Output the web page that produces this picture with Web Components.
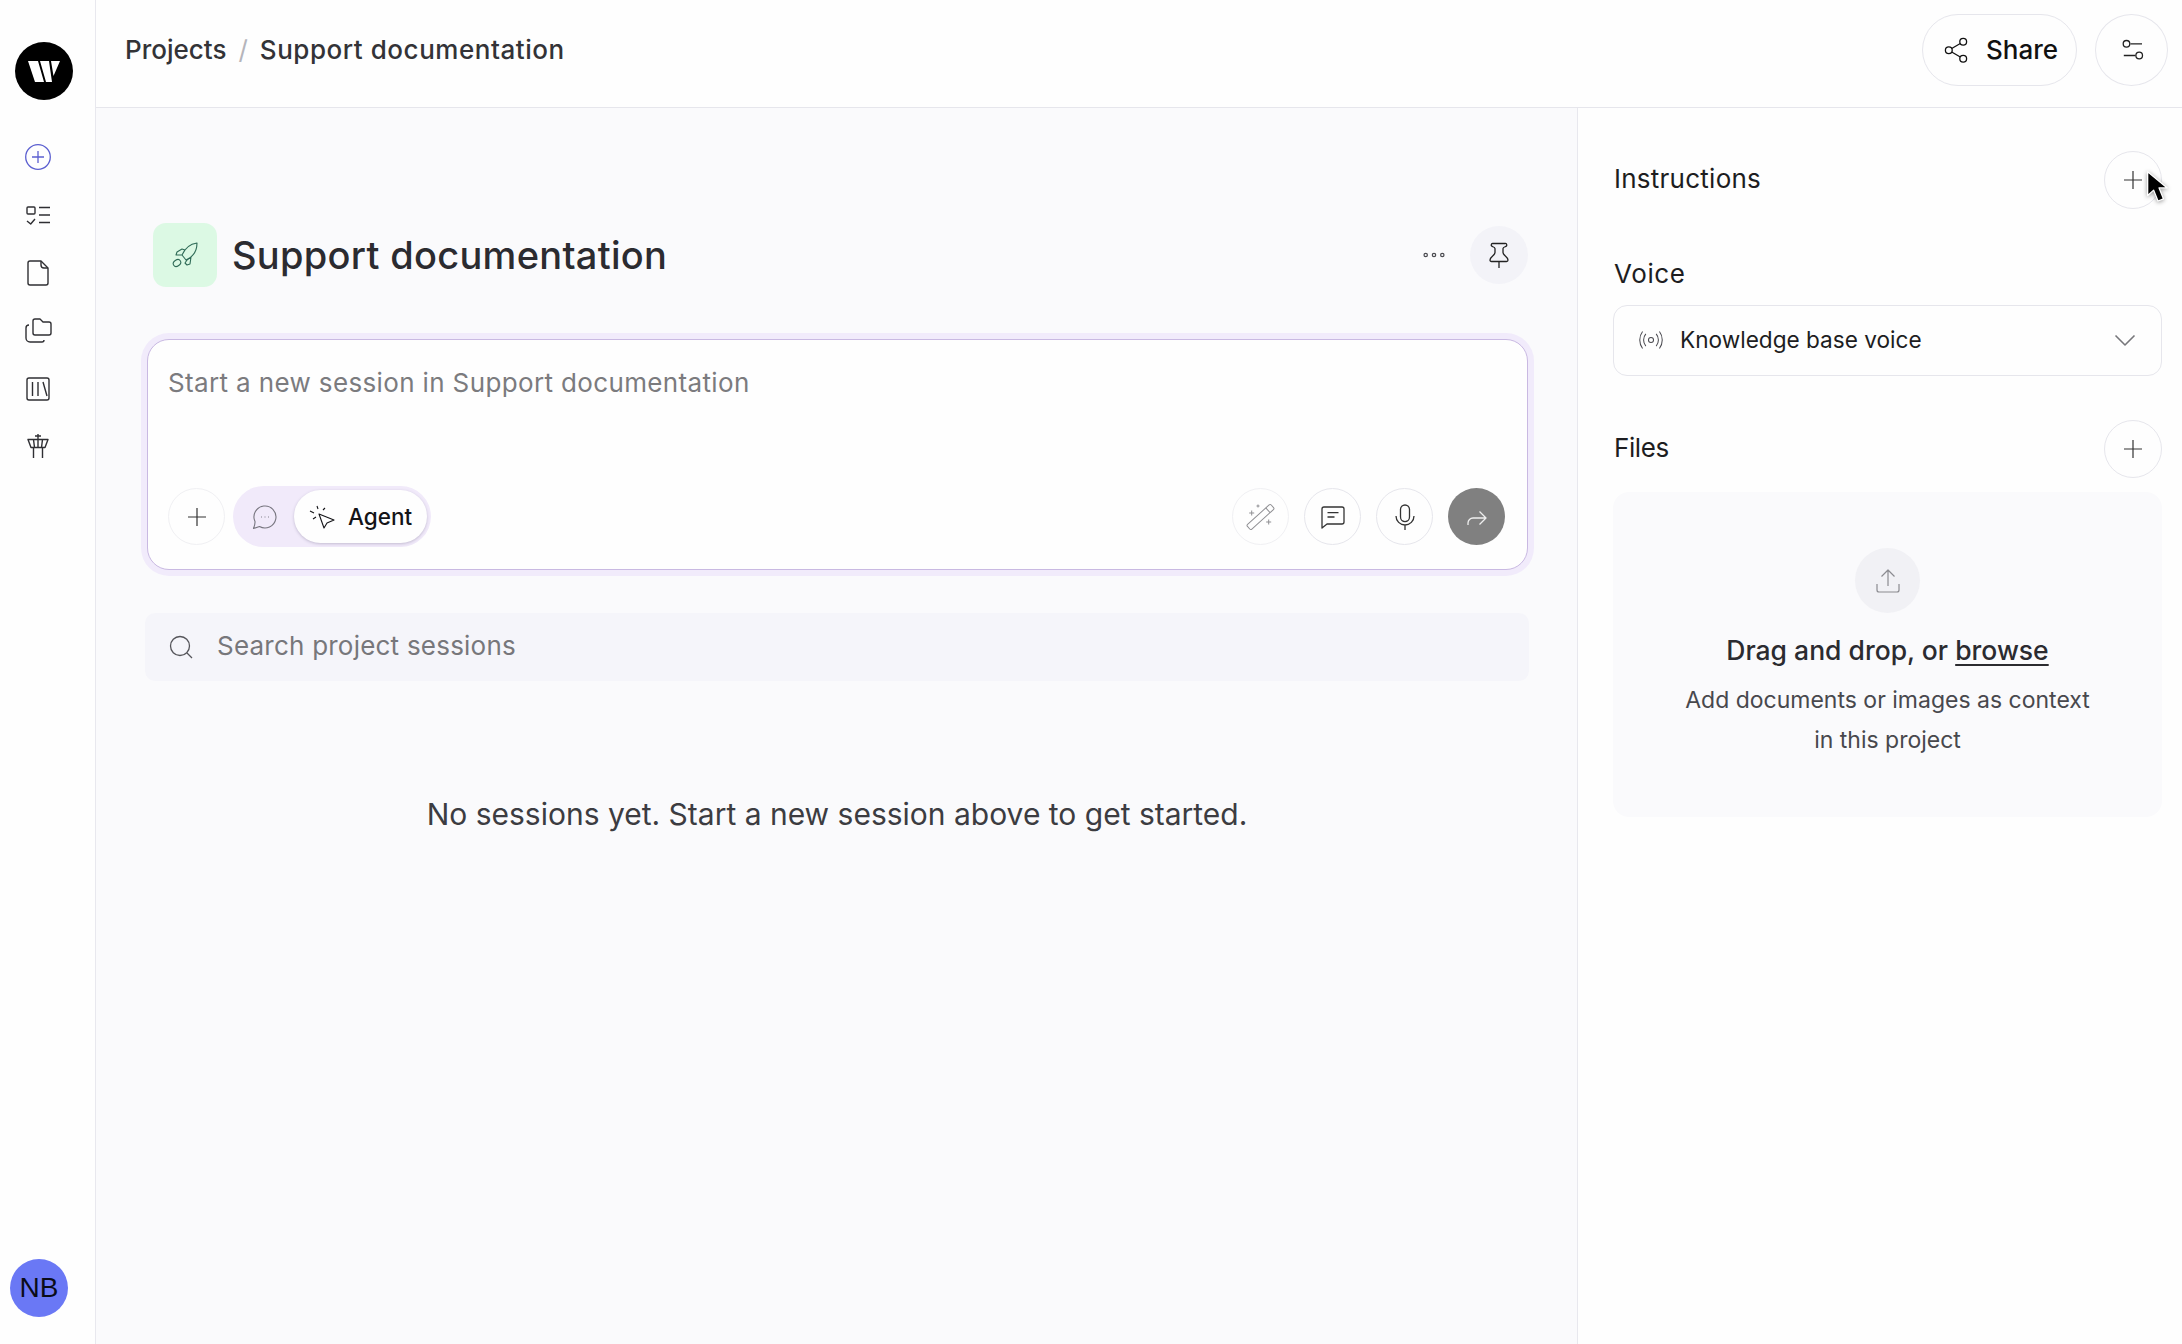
<!DOCTYPE html>
<html lang="en">
<head>
<meta charset="utf-8">
<title>Support documentation</title>
<style>
html, body { margin: 0; height: 100%; }
body { font-family: Inter, "Liberation Sans", sans-serif; color: #2b2b30; background: #fefefe; }
</style>
</head>
<body>
<w-app>
	<w-sidebar slot="sidebar"></w-sidebar>
	<w-topbar slot="topbar"></w-topbar>
	<w-project slot="main" name="Support documentation"></w-project>
	<w-panel slot="panel"></w-panel>
</w-app>

<script>
const ICONS = {
	plusCircle: `<circle cx="16" cy="16" r="12.300"/><path d="M16 10v12M10 16h12"/>`,
	tasks: `<rect x="5" y="8" width="8" height="7" rx="1"/><path d="M5 22l3.700 3 4.300-5M17 8.500h11M17 16h11M17 23.500h11"/>`,
	doc: `<path d="M8 4h11l7 7v15a2 2 0 0 1-2 2H8a2 2 0 0 1-2-2V6a2 2 0 0 1 2-2z"/><path d="M19 4v4a3 3 0 0 0 3 3h4"/>`,
	folders: `<path d="M11 6a2 2 0 0 1 2-2h5l3 3h6a2 2 0 0 1 2 2v9a2 2 0 0 1-2 2H13a2 2 0 0 1-2-2z"/><path d="M7 10a3 3 0 0 0-3 3v10a4 4 0 0 0 4 4h12a2 2 0 0 0 2-2"/>`,
	library: `<rect x="5" y="5" width="22" height="22" rx="2"/><path d="M10.500 9v14M16 9v14M21 9l4 14"/>`,
	tower: `<path d="M6 8.500h20l-3 8H9zM16 3v5.500M13 5h6M11.500 8.500l1 8M20.500 8.500l-1 8M16 8.500v8M11.500 16.500V27M20.500 16.500V27"/>`,
	rocket: `<path d="M32 8C25 9 20 13 17 20l4 5c7-3 11-9 11-17zM17 14l-5 3-1 3h6l3-5zM22 25l-2 3 2 2 3-1 1-7z"/><ellipse cx="12" cy="28" rx="4" ry="3" transform="rotate(-35 12 28)"/>`,
	dots: `<circle cx="7.700" cy="16" r="1.700"/><circle cx="16" cy="16" r="1.700"/><circle cx="24.300" cy="16" r="1.700"/>`,
	pin: `<path d="M10 4.500h12a1.500 1.500 0 0 1 .5 3c-1.500.5-2.500 1-2.500 2v4c0 3 5 4 5 7.500 0 1-.5 1.500-1.500 1.500H8.500C7.500 22.500 7 22 7 21c0-3.500 5-4.500 5-7.500v-4c0-1-1-1.500-2.500-2a1.500 1.500 0 0 1 .5-3zM16 22.500V29"/>`,
	plus: `<path d="M16 7v18M7 16h18"/>`,
	bubble: `<path d="M15 26.600A11 11 0 1 1 19.500 31.500L13.500 33.500C14.500 31 15.200 29 15 26.600z"/><path d="M21 22h.6M24.700 22h.6M28.400 22h.6" stroke-width="1.300"/>`,
	cursor: `<path d="M79 19l15 6-7 3-3 5zM77 11l1 3M85 13l-2 2M70 16l4 2M73 24l3-2"/>`,
	wand: `<g transform="translate(15.500 16) rotate(-42)"><rect x="-16" y="-3.200" width="32" height="6.400" rx="1.500"/><path d="M10-3.200v6.400"/></g><path d="M6.700 9.500v5M4.200 12h5M13 3.500v3M11.500 5h3M23.700 18.500v5M21.200 21h5"/>`,
	comment: `<path d="M5 27V8a2 2 0 0 1 2-2h18a2 2 0 0 1 2 2v13a2 2 0 0 1-2 2H10z"/><path d="M10.500 11.700h11M10.500 16h7"/>`,
	mic: `<rect x="11.500" y="4" width="9" height="16.600" rx="4.500"/><path d="M7 15a9 9 0 0 0 18 0M16 24v5"/>`,
	send: `<path d="M7 24v-2a5 5 0 0 1 5-5h13M18.500 10.500L25 17l-6.500 6.500"/>`,
	share: `<circle cx="23.200" cy="7.700" r="3.400"/><circle cx="8.800" cy="16.300" r="3.400"/><circle cx="23.200" cy="24.700" r="3.400"/><path d="M20.300 9.500l-8.600 5M11.700 18l8.600 5"/>`,
	sliders: `<circle cx="10.500" cy="9.800" r="3.300"/><path d="M14.500 9.800H26M7.800 21.500h11.700"/><circle cx="23.200" cy="21.500" r="3.300"/>`,
	signal: `<circle cx="16" cy="16" r="2.700"/><path d="M10.500 9.500a10 10 0 0 0 0 13M21.500 9.500a10 10 0 0 1 0 13M7 7a15 15 0 0 0 0 18M25 7a15 15 0 0 1 0 18"/>`,
	chevron: `<path d="M6.500 11.500l9.500 9.500 9.500-9.500"/>`,
	search: `<circle cx="15" cy="15" r="9.500"/><path d="M22 22l5 5"/>`,
	upload: `<path d="M16 21V5M9.500 11.500L16 5l6.500 6.500M5 19v6a2 2 0 0 0 2 2h18a2 2 0 0 0 2-2v-6"/>`,
};
const VIEWBOX = { rocket: "0 0 40 40", bubble: "11 8 28 28", cursor: "68 8 28 28" };

class WIcon extends HTMLElement {
	connectedCallback() {
		if (this.shadowRoot) return;
		const name = this.getAttribute("name");
		const size = this.getAttribute("size") || 32;
		const stroke = this.getAttribute("stroke") || 1.4;
		this.attachShadow({ mode: "open" }).innerHTML = `
<style>
:host { display: inline-flex; flex: none; width: ${size}px; height: ${size}px; }
svg { display: block; width: 100%; height: 100%; fill: none; stroke: currentColor; stroke-width: ${stroke}; stroke-linejoin: round; }
</style>
<svg viewBox="${VIEWBOX[name] || "0 0 32 32"}" aria-hidden="true">${ICONS[name]}</svg>`;
	}
}
customElements.define("w-icon", WIcon);

const roundTemplate = document.createElement("template");
roundTemplate.innerHTML = `
<style>
:host {
	display: inline-flex;
	flex: none;
	align-items: center;
	justify-content: center;
	box-sizing: border-box;
	width: var(--size, 58px);
	height: var(--size, 58px);
	border-radius: 50%;
	border: 1px solid #e6e6ec;
	background: #fefefe;
	color: #333;
}
:host([kind="soft"]) { border-color: transparent; background: #f3f3f8; }
:host([kind="solid"]) { border-color: transparent; background: #808080; color: #eee; }
:host([kind="faint"]) { border-color: #f0f0f3; }
</style>
<slot></slot>`;
class WRound extends HTMLElement {
	constructor() {
		super().attachShadow({ mode: "open" }).appendChild(roundTemplate.content.cloneNode(true));
	}
}
customElements.define("w-round", WRound);

const appTemplate = document.createElement("template");
appTemplate.innerHTML = `
<style>
:host {
	display: grid;
	grid-template-columns: 96px 1fr 605px;
	grid-template-rows: 108px 1fr;
	grid-template-areas: "side top top" "side main panel";
	height: 100vh;
	overflow: hidden;
}
::slotted([slot="sidebar"]) { grid-area: side; }
::slotted([slot="topbar"]) { grid-area: top; }
::slotted([slot="main"]) { grid-area: main; }
::slotted([slot="panel"]) { grid-area: panel; }
</style>
<slot name="sidebar"></slot>
<slot name="topbar"></slot>
<slot name="main"></slot>
<slot name="panel"></slot>`;
class WApp extends HTMLElement {
	constructor() {
		super().attachShadow({ mode: "open" }).appendChild(appTemplate.content.cloneNode(true));
	}
}
customElements.define("w-app", WApp);

const sidebarTemplate = document.createElement("template");
sidebarTemplate.innerHTML = `
<style>
:host {
	display: flex;
	flex-direction: column;
	box-sizing: border-box;
	padding: 42px 0 27px;
	background: #fefefe;
	border-right: 1px solid #e8e8ee;
}
.logo { display: block; width: 58px; height: 58px; margin-left: 15px; }
nav { display: flex; flex-direction: column; margin-top: 28px; width: 76px; color: #2f2f33; }
nav a { display: flex; align-items: center; justify-content: center; height: 58px; }
nav a:first-child { color: #5b5fd0; }
.avatar {
	display: flex;
	align-items: center;
	justify-content: center;
	width: 58px;
	height: 58px;
	margin: auto 0 0 10px;
	border-radius: 50%;
	background: #6a78f5;
	color: #0a0c18;
	font: 28px "Liberation Sans", sans-serif;
}
</style>
<svg class="logo" viewBox="1 2 58 58" aria-hidden="true">
	<circle cx="30" cy="31" r="29" fill="#000"/>
	<path fill="#fff" d="M14 21h10l6 21h-9zM26 21h9l3 21h-6zM37 21h9l-6.500 15z"/>
</svg>
<nav>
	<a><w-icon name="plusCircle" stroke="1.300"></w-icon></a>
	<a><w-icon name="tasks"></w-icon></a>
	<a><w-icon name="doc"></w-icon></a>
	<a><w-icon name="folders"></w-icon></a>
	<a><w-icon name="library"></w-icon></a>
	<a><w-icon name="tower"></w-icon></a>
</nav>
<div class="avatar">NB</div>`;
class WSidebar extends HTMLElement {
	constructor() {
		super().attachShadow({ mode: "open" }).appendChild(sidebarTemplate.content.cloneNode(true));
	}
}
customElements.define("w-sidebar", WSidebar);

const topbarTemplate = document.createElement("template");
topbarTemplate.innerHTML = `
<style>
:host {
	display: flex;
	align-items: center;
	box-sizing: border-box;
	padding: 0 14px 8px 29px;
	background: #fefefe;
	border-bottom: 1px solid #e6e6ec;
	font-size: 26px;
	font-weight: 500;
	letter-spacing: 0;
}
.sep { margin: 0 12px; color: #b5b5bb; font-weight: 400; }
.crumb { color: #333337; }
.crumb + .sep + .crumb { letter-spacing: 0.55px; }
.share {
	display: flex;
	align-items: center;
	gap: 14px;
	box-sizing: border-box;
	width: 155px;
	height: 72px;
	margin-left: auto;
	padding-left: 17px;
	border: 1px solid #e6e6ec;
	border-radius: 36px;
	color: #111;
}
w-round { --size: 73px; height: 72px; margin-left: 18px; color: #222; }
</style>
<span class="crumb">Projects</span><span class="sep">/</span><span class="crumb">Support documentation</span>
<div class="share"><w-icon name="share" stroke="1.300"></w-icon><span>Share</span></div>
<w-round><w-icon name="sliders" stroke="1.300"></w-icon></w-round>`;
class WTopbar extends HTMLElement {
	constructor() {
		super().attachShadow({ mode: "open" }).appendChild(topbarTemplate.content.cloneNode(true));
	}
}
customElements.define("w-topbar", WTopbar);

const modeTemplate = document.createElement("template");
modeTemplate.innerHTML = `
<style>
:host {
	display: flex;
	align-items: center;
	box-sizing: border-box;
	width: 198px;
	height: 61px;
	margin-left: 8px;
	padding: 0 4px 0 18px;
	border-radius: 31px;
	background: #f1eafa;
	color: #77757f;
}
.on {
	display: flex;
	align-items: center;
	gap: 12px;
	box-sizing: border-box;
	width: 133px;
	height: 53px;
	margin-left: 15px;
	padding-left: 14px;
	border-radius: 27px;
	background: #fefefe;
	box-shadow: 0 1px 3px rgba(60, 50, 90, 0.25);
	color: #141418;
	font-size: 22.500px;
	font-weight: 500;
}
</style>
<w-icon name="bubble" size="28" stroke="1.100"></w-icon>
<div class="on"><w-icon name="cursor" size="28" stroke="1.100"></w-icon><span>Agent</span></div>`;
class WModeSwitch extends HTMLElement {
	constructor() {
		super().attachShadow({ mode: "open" }).appendChild(modeTemplate.content.cloneNode(true));
	}
}
customElements.define("w-mode-switch", WModeSwitch);

const composerTemplate = document.createElement("template");
composerTemplate.innerHTML = `
<style>
:host {
	display: flex;
	flex-direction: column;
	box-sizing: border-box;
	height: 231px;
	margin: 52px 1px 0 2px;
	padding: 24px 22px 22px 20px;
	border: 1px solid #c9b9e2;
	border-radius: 22px;
	background: #fefefe;
	box-shadow: 0 0 0 6px #f1ebfb;
}
.placeholder { color: #7b7b7e; font-size: 26px; line-height: 38px; letter-spacing: 0.36px; }
.row { display: flex; align-items: center; margin-top: auto; }
.right { display: flex; gap: 15px; margin-left: auto; }
w-round { --size: 57px; }
</style>
<div class="placeholder"><slot></slot></div>
<div class="row">
	<w-round kind="faint"><w-icon name="plus" stroke="1.200"></w-icon></w-round>
	<w-mode-switch></w-mode-switch>
	<div class="right">
		<w-round kind="faint" style="color:#8f8f93"><w-icon name="wand" stroke="1"></w-icon></w-round>
		<w-round><w-icon name="comment" stroke="1.300"></w-icon></w-round>
		<w-round><w-icon name="mic" stroke="1.300"></w-icon></w-round>
		<w-round kind="solid"><w-icon name="send" stroke="1.300"></w-icon></w-round>
	</div>
</div>`;
class WComposer extends HTMLElement {
	constructor() {
		super().attachShadow({ mode: "open" }).appendChild(composerTemplate.content.cloneNode(true));
	}
}
customElements.define("w-composer", WComposer);

const searchTemplate = document.createElement("template");
searchTemplate.innerHTML = `
<style>
:host {
	display: flex;
	align-items: center;
	gap: 20px;
	box-sizing: border-box;
	height: 68px;
	margin-top: 43px;
	padding: 0 0 0 20px;
	border-radius: 10px;
	background: #f5f5fa;
	color: #77777b;
	font-size: 26px;
	letter-spacing: 0.22px;
}
span { margin-bottom: 3px; }
w-icon { color: #55555a; }
</style>
<w-icon name="search" size="32" stroke="1.300"></w-icon><span><slot></slot></span>`;
class WSearch extends HTMLElement {
	constructor() {
		super().attachShadow({ mode: "open" }).appendChild(searchTemplate.content.cloneNode(true));
	}
}
customElements.define("w-search", WSearch);

const projectTemplate = document.createElement("template");
projectTemplate.innerHTML = `
<style>
:host {
	display: block;
	box-sizing: border-box;
	padding: 115px 48px 0 49px;
	background: #fafafc;
}
.head { display: flex; align-items: center; height: 64px; padding: 0 1px 0 8px; }
.badge {
	display: flex;
	align-items: center;
	justify-content: center;
	width: 64px;
	height: 64px;
	border-radius: 13px;
	background: #dcf9e4;
	color: #2f6b57;
}
h1 { margin: 0 0 0 15px; font-size: 38px; font-weight: 500; color: #2b2b30; letter-spacing: 0.3px; }
.dots { margin-left: auto; color: #4a4a50; }
w-round { margin-left: 20px; color: #222; }
.empty { margin-top: 113px; text-align: center; color: #3c3c41; font-size: 30px; line-height: 40px; }
</style>
<div class="head">
	<div class="badge"><w-icon name="rocket" size="40" stroke="1.100"></w-icon></div>
	<h1></h1>
	<w-icon class="dots" name="dots" stroke="1.200"></w-icon>
	<w-round kind="soft"><w-icon name="pin" stroke="1.300"></w-icon></w-round>
</div>
<w-composer></w-composer>
<w-search>Search project sessions</w-search>
<div class="empty">No sessions yet. Start a new session above to get started.</div>`;
class WProject extends HTMLElement {
	constructor() {
		super().attachShadow({ mode: "open" }).appendChild(projectTemplate.content.cloneNode(true));
	}

	connectedCallback() {
		const name = this.getAttribute("name");
		this.shadowRoot.querySelector("h1").textContent = name;
		this.shadowRoot.querySelector("w-composer").textContent = `Start a new session in ${name}`;
	}
}
customElements.define("w-project", WProject);

const dropzoneTemplate = document.createElement("template");
dropzoneTemplate.innerHTML = `
<style>
:host {
	display: flex;
	flex-direction: column;
	align-items: center;
	box-sizing: border-box;
	height: 325px;
	margin-top: 14px;
	padding-top: 56px;
	border-radius: 16px;
	background: #fafafc;
}
.up {
	display: flex;
	align-items: center;
	justify-content: center;
	width: 65px;
	height: 65px;
	border-radius: 50%;
	background: #f1f1f5;
	color: #8b8b90;
}
.title { margin-top: 19px; font-size: 26.500px; font-weight: 500; line-height: 36px; color: #2b2b30; }
.title u { text-underline-offset: 4px; }
.hint { margin-top: 12px; font-size: 23px; line-height: 40px; text-align: center; color: #48484d; }
</style>
<div class="up"><w-icon name="upload" stroke="1.200"></w-icon></div>
<div class="title">Drag and drop, or <u>browse</u></div>
<div class="hint">Add documents or images as context<br>in this project</div>`;
class WDropzone extends HTMLElement {
	constructor() {
		super().attachShadow({ mode: "open" }).appendChild(dropzoneTemplate.content.cloneNode(true));
	}
}
customElements.define("w-dropzone", WDropzone);

const panelTemplate = document.createElement("template");
panelTemplate.innerHTML = `
<style>
:host {
	display: block;
	position: relative;
	box-sizing: border-box;
	padding: 43px 20px 0 35px;
	background: #fefefe;
	border-left: 1px solid #e8e8ee;
	font-size: 26px;
	color: #1d1d21;
}
.row { display: flex; align-items: center; justify-content: space-between; height: 58px; }
.row span { margin: 0 0 3px 1px; }
.label { margin-left: 1px; }
.instructions { letter-spacing: 0.25px; }
.label { margin-top: 50px; line-height: 30px; letter-spacing: 0.6px; }
.select {
	display: flex;
	align-items: center;
	box-sizing: border-box;
	height: 71px;
	margin-top: 16px;
	padding: 0 20px 2px 22px;
	border: 1px solid #e6e6ec;
	border-radius: 14px;
	font-size: 22.600px;
}
.select w-icon:first-child { color: #4a4a50; margin-right: 14px; }
.select span { flex: 1; }
.select w-icon:last-child { color: #77777b; }
.files { margin-top: 44px; letter-spacing: -0.4px; }
.pointer { position: absolute; left: 568px; top: 62px; width: 24px; height: 37px; filter: drop-shadow(0 1px 2px rgba(0, 0, 0, 0.4)); }
</style>
<div class="row"><span class="instructions">Instructions</span><w-round><w-icon name="plus" stroke="1.200"></w-icon></w-round></div>
<div class="label">Voice</div>
<div class="select">
	<w-icon name="signal" size="30" stroke="1.100"></w-icon>
	<span>Knowledge base voice</span>
	<w-icon name="chevron" stroke="1.600"></w-icon>
</div>
<div class="row files"><span>Files</span><w-round><w-icon name="plus" stroke="1.200"></w-icon></w-round></div>
<w-dropzone></w-dropzone>
<svg class="pointer" viewBox="0 0 22 34" aria-hidden="true">
	<path d="M1.500 1.500v22l5.500-5 4 10 5-2-4-10h7.500z" fill="#000" stroke="#fff" stroke-width="1.200" stroke-linejoin="round"/>
</svg>`;
class WPanel extends HTMLElement {
	constructor() {
		super().attachShadow({ mode: "open" }).appendChild(panelTemplate.content.cloneNode(true));
	}
}
customElements.define("w-panel", WPanel);
</script>
</body>
</html>
